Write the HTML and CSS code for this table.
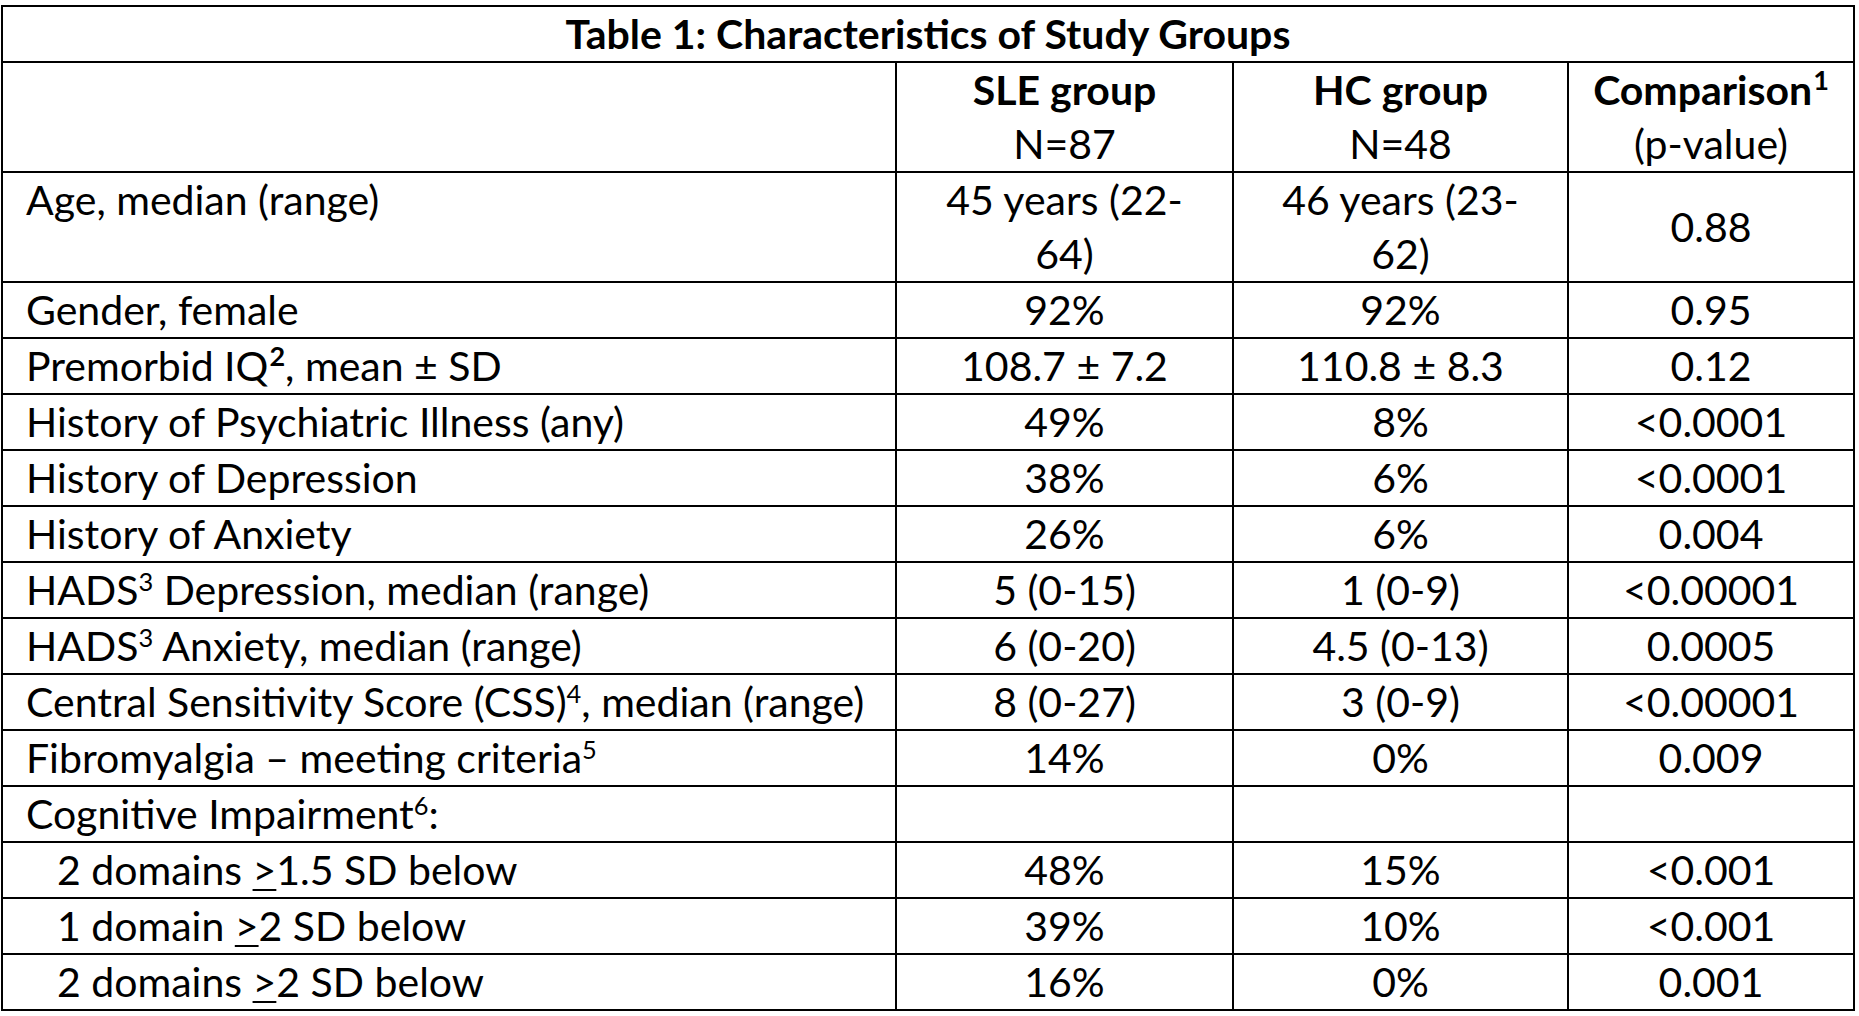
FILE: index.html
```html
<!DOCTYPE html>
<html lang="en">
<head>
<meta charset="utf-8">
<title>Table 1: Characteristics of Study Groups</title>
<link rel="stylesheet" href="styles.css">
</head>
<body>
<table class="chars">
  <colgroup>
    <col class="c-label">
    <col class="c-sle">
    <col class="c-hc">
    <col class="c-cmp">
  </colgroup>
  <thead>
    <tr><th class="title" colspan="4">Table 1: Characteristics of Study Groups</th></tr>
    <tr class="head">
      <td class="label"></td>
      <td class="val"><b>SLE group</b><br>N=87</td>
      <td class="val"><b>HC group</b><br>N=48</td>
      <td class="val"><b>Comparison<sup class="bsup">1</sup></b><br>(p-value)</td>
    </tr>
  </thead>
  <tbody>
    <tr><td class="label">Age, median (range)</td><td class="val">45 years (22-<br>64)</td><td class="val">46 years (23-<br>62)</td><td class="val">0.88</td></tr>
    <tr><td class="label">Gender, female</td><td class="val">92%</td><td class="val">92%</td><td class="val">0.95</td></tr>
    <tr><td class="label">Premorbid IQ<sup class="bsup">2</sup>, mean ± SD</td><td class="val">108.7 ± 7.2</td><td class="val">110.8 ± 8.3</td><td class="val">0.12</td></tr>
    <tr><td class="label">History of Psychiatric Illness (any)</td><td class="val">49%</td><td class="val">8%</td><td class="val">&lt;0.0001</td></tr>
    <tr><td class="label">History of Depression</td><td class="val">38%</td><td class="val">6%</td><td class="val">&lt;0.0001</td></tr>
    <tr><td class="label">History of Anxiety</td><td class="val">26%</td><td class="val">6%</td><td class="val">0.004</td></tr>
    <tr><td class="label">HADS<sup>3</sup> Depression, median (range)</td><td class="val">5 (0-15)</td><td class="val">1 (0-9)</td><td class="val">&lt;0.00001</td></tr>
    <tr><td class="label">HADS<sup>3</sup> Anxiety, median (range)</td><td class="val">6 (0-20)</td><td class="val">4.5 (0-13)</td><td class="val">0.0005</td></tr>
    <tr><td class="label">Central Sensitivity Score (CSS)<sup>4</sup>, median (range)</td><td class="val">8 (0-27)</td><td class="val">3 (0-9)</td><td class="val">&lt;0.00001</td></tr>
    <tr><td class="label">Fibromyalgia – meeting criteria<sup>5</sup></td><td class="val">14%</td><td class="val">0%</td><td class="val">0.009</td></tr>
    <tr><td class="label">Cognitive Impairment<sup>6</sup>:</td><td class="val"></td><td class="val"></td><td class="val"></td></tr>
    <tr><td class="label sub">2 domains <u>&gt;</u>1.5 SD below</td><td class="val">48%</td><td class="val">15%</td><td class="val">&lt;0.001</td></tr>
    <tr><td class="label sub">1 domain <u>&gt;</u>2 SD below</td><td class="val">39%</td><td class="val">10%</td><td class="val">&lt;0.001</td></tr>
    <tr><td class="label sub">2 domains <u>&gt;</u>2 SD below</td><td class="val">16%</td><td class="val">0%</td><td class="val">0.001</td></tr>
  </tbody>
</table>
</body>
</html>
```

FILE: styles.css
```css
html, body {
  margin: 0;
  padding: 0;
  background: #ffffff;
}

body {
  padding: 5px 0 0 1px;
  font-family: Lato, "Open Sans", "Liberation Sans", sans-serif;
  color: #000000;
}

.chars {
  border-collapse: collapse;
  table-layout: fixed;
  width: 1852px;
  font-size: 41px;
  line-height: 54px;
}

.c-label { width: 894px; }
.c-sle { width: 337px; }
.c-hc { width: 335px; }
.c-cmp { width: 286px; }

.chars th,
.chars td {
  border: 2px solid #000000;
  padding: 0;
  white-space: nowrap;
}

.chars .title {
  font-weight: 700;
  text-align: center;
}

.chars .label {
  text-align: left;
  vertical-align: top;
  padding-left: 23px;
}

.chars .label.sub {
  padding-left: 54px;
}

.chars .val {
  text-align: center;
  vertical-align: middle;
}

sup {
  font-size: 0.62em;
  line-height: 0;
  vertical-align: 0.55em;
}

sup.bsup {
  font-weight: 700;
  font-size: 0.66em;
  margin-left: 1px;
}

u {
  text-decoration-thickness: 2px;
  text-underline-offset: 4px;
}
```
